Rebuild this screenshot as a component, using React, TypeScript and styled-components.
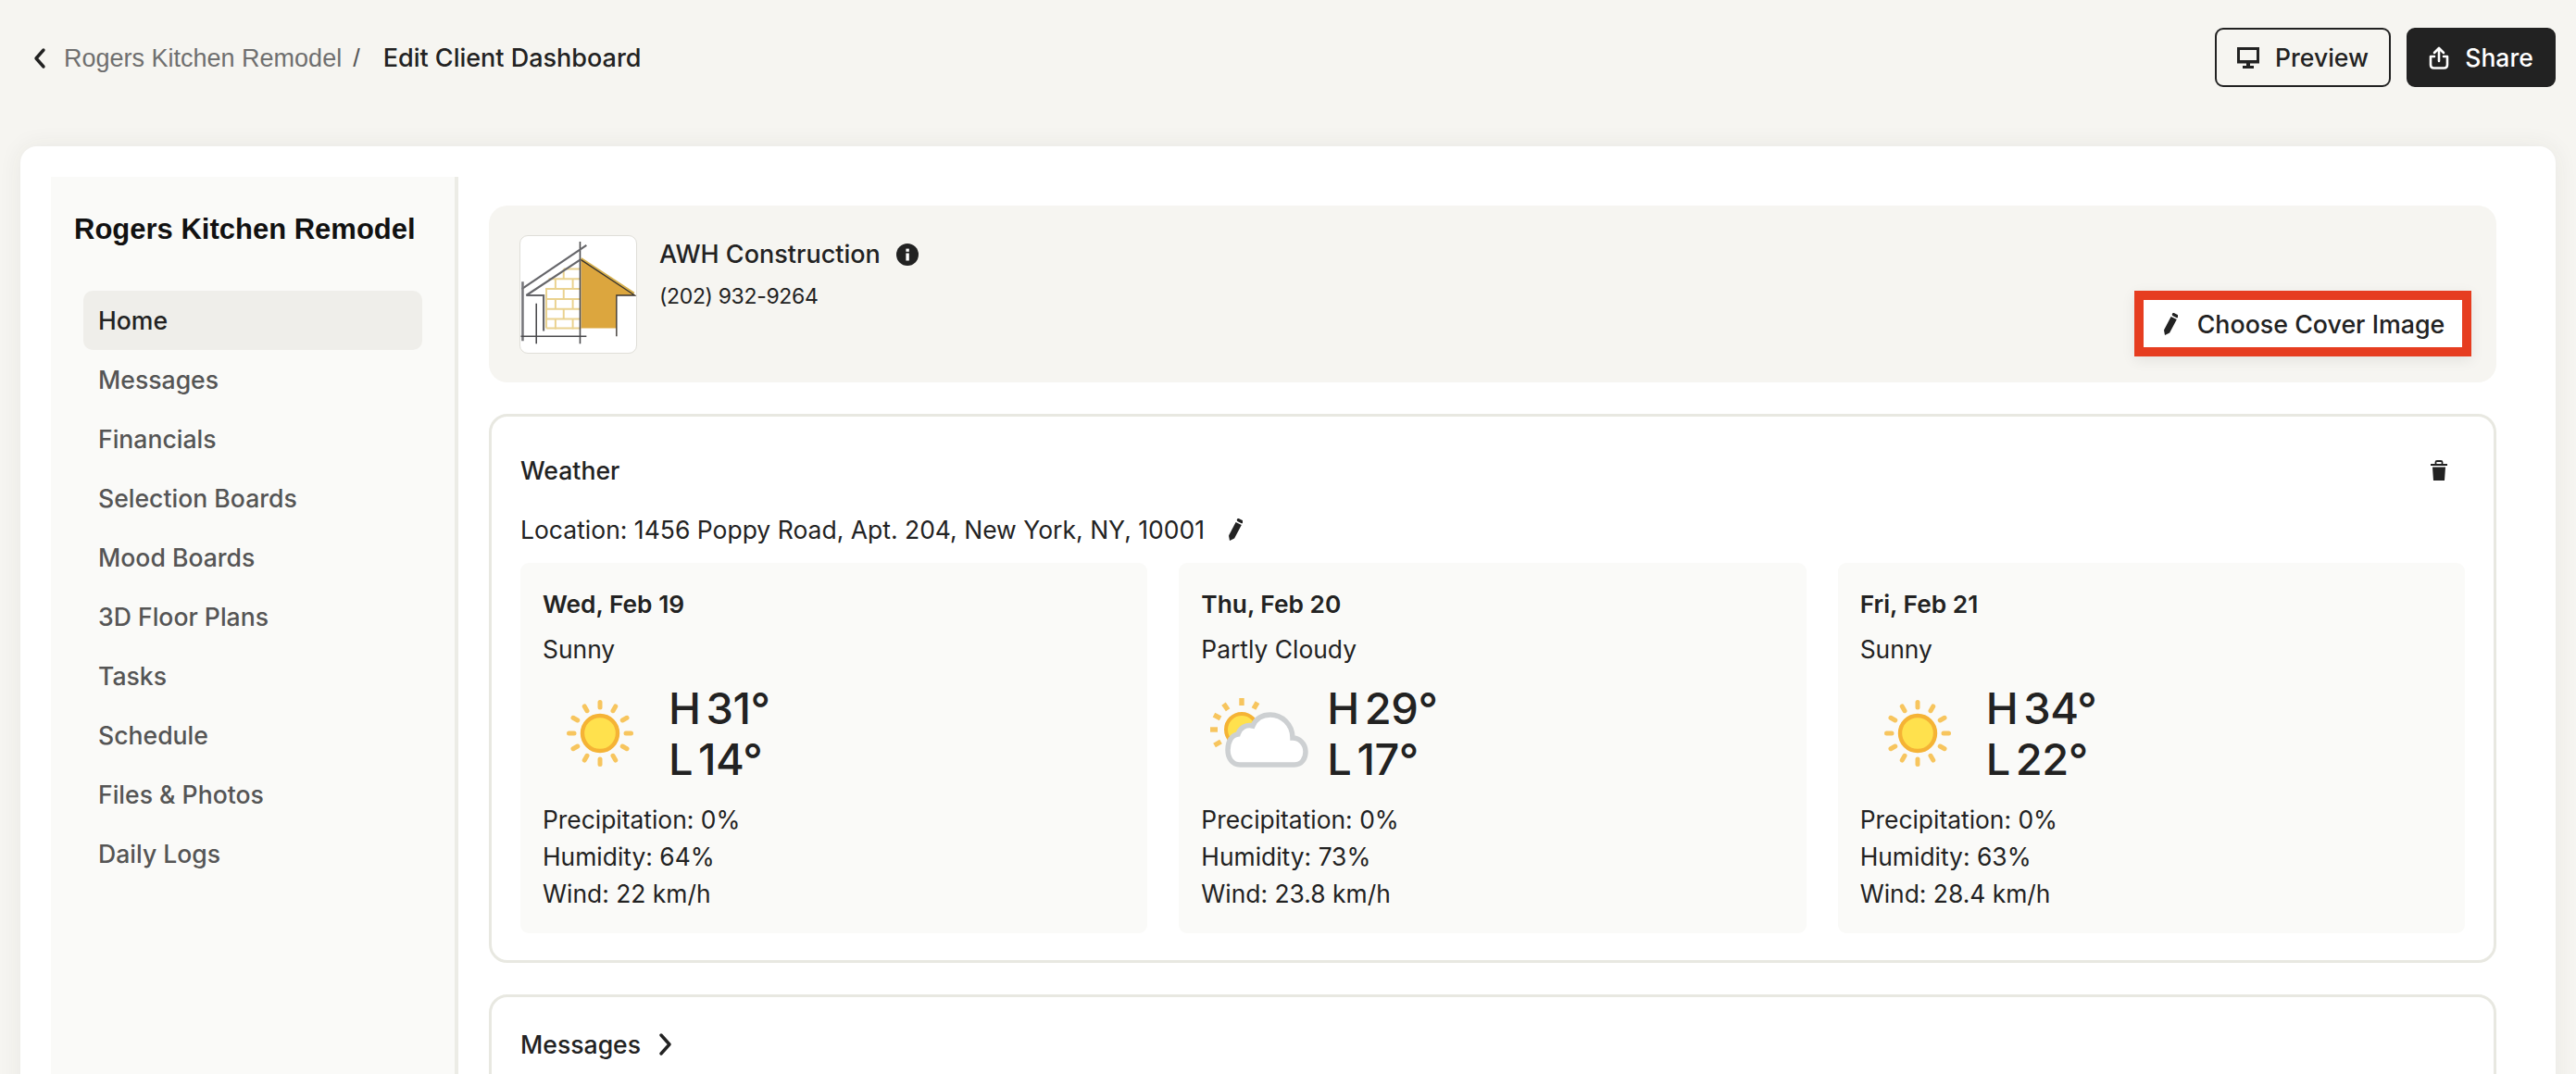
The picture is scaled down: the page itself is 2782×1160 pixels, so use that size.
import React from "react";
import styled, { createGlobalStyle } from "styled-components";

const Global = createGlobalStyle`
  html, body { margin: 0; height: 1160px; overflow: hidden; background: #f6f5f1; }
  * { box-sizing: border-box; }
  body { font-family: Inter, "Noto Sans", sans-serif; color: #222; }
`;

const Page = styled.div`
  height: 1160px;
  padding: 30px 22px 0;
  background: #f6f5f1;
  overflow: hidden;
`;
const TopBar = styled.header`
  display: flex;
  align-items: center;
  justify-content: space-between;
  height: 64px;
  margin-bottom: 64px;
`;
const Crumbs = styled.nav`
  display: flex;
  align-items: center;
  padding: 2px 0 0 13px;
  height: 64px;
`;
const BackLink = styled.span`
  display: flex;
  align-items: center;
  width: 34px;
`;
const CrumbParent = styled.span`
  font: 400 27px/40px "Liberation Sans", Arial, sans-serif;
  color: #6f6f6f;
`;
const CrumbSlash = styled.span`
  font: 400 27px/40px "Liberation Sans", Arial, sans-serif;
  color: #555;
  margin: 0 25px 0 12px;
`;
const CrumbCurrent = styled.span`
  font-size: 27px;
  line-height: 42px;
  font-weight: 500;
  color: #222;
`;
const Actions = styled.div`
  display: flex;
  gap: 17px;
`;
const TopButton = styled.button<{ $dark?: boolean }>`
  display: flex;
  align-items: center;
  justify-content: center;
  gap: 17px;
  height: 64px;
  width: ${(p) => (p.$dark ? "161px" : "190px")};
  border-radius: 9px;
  border: 2px solid #222;
  background: ${(p) => (p.$dark ? "#222" : "transparent")};
  color: ${(p) => (p.$dark ? "#fff" : "#222")};
  font: 500 26.5px/40px Inter, sans-serif;
  padding: 0;
`;
const Board = styled.section`
  display: flex;
  min-height: 1100px;
  padding: 33px 64px 0 33px;
  background: #fff;
  border-radius: 18px;
  box-shadow: 0 0 26px rgba(60, 60, 40, 0.07);
`;
const Sidebar = styled.aside`
  flex: 0 0 440px;
  min-width: 0;
  padding: 37px 35px 0 25px;
  background: #fafaf8;
  border-right: 4px solid #ecece6;
`;
const ProjectTitle = styled.h1`
  margin: 0 0 46px;
  font: 700 31px/40px "Liberation Sans", Arial, sans-serif;
  color: #111;
  white-space: nowrap;
`;
const NavList = styled.ul`
  list-style: none;
  margin: 0 0 0 10px;
  padding: 0;
`;
const NavItem = styled.li<{ $active?: boolean }>`
  height: 64px;
  padding-left: 16px;
  border-radius: 10px;
  font-size: 26.6px;
  line-height: 65px;
  font-weight: 500;
  color: ${(p) => (p.$active ? "#222" : "#555")};
  background: ${(p) => (p.$active ? "#efeeea" : "transparent")};
`;
const Main = styled.main`
  flex: 1;
  min-width: 0;
  padding: 31px 0 0 33px;
  display: flex;
  flex-direction: column;
  gap: 34px;
`;
const Band = styled.div`
  display: flex;
  justify-content: space-between;
  align-items: flex-end;
  height: 191px;
  padding: 32px 27px 28px 33px;
  background: #f6f5f1;
  border-radius: 20px;
`;
const Company = styled.div`
  display: flex;
  gap: 24px;
  align-self: flex-start;
`;
const LogoBox = styled.div`
  width: 127px;
  height: 128px;
  background: #fff;
  border: 1px solid #dfded8;
  border-radius: 9px;
  overflow: hidden;
`;
const CompanyName = styled.div`
  display: flex;
  align-items: center;
  gap: 17px;
  font-size: 27px;
  line-height: 42px;
  font-weight: 500;
`;
const Phone = styled.div`
  margin-top: 3px;
  font-size: 23px;
  line-height: 42px;
  letter-spacing: -0.35px;
`;
const CoverButton = styled.button`
  display: flex;
  align-items: center;
  justify-content: center;
  gap: 21px;
  width: 364px;
  height: 71px;
  border: 10px solid #e63d20;
  background: #fff;
  color: #222;
  font: 500 26.8px/40px Inter, sans-serif;
  padding: 0 0 0 3px;
  box-shadow: 0 4px 14px rgba(0, 0, 0, 0.08);
`;
const Panel = styled.article`
  border: 3px solid #e8e8e1;
  border-radius: 20px;
  padding: 31px 31px 29px;
  flex: none;
`;
const PanelHead = styled.div`
  display: flex;
  align-items: center;
  justify-content: space-between;
  height: 54px;
`;
const PanelTitle = styled.h2`
  margin: 0;
  font-size: 26.6px;
  line-height: 40px;
  font-weight: 500;
`;
const Location = styled.div`
  display: flex;
  align-items: center;
  gap: 26px;
  height: 44px;
  margin: 15px 0 14px;
  font-size: 26.5px;
`;
const TrashSlot = styled.span`
  display: flex;
  margin-right: 19px;
`;
const Forecast = styled.div`
  display: grid;
  grid-template-columns: repeat(3, 1fr);
  gap: 34px;
`;
const Day = styled.div`
  padding: 25px 24px 23px;
  height: 400px;
  background: #fafaf8;
  border-radius: 9px;
`;
const DayDate = styled.div`
  font-size: 26.3px;
  line-height: 40px;
  font-weight: 600;
`;
const DayCondition = styled.div`
  margin-top: 8px;
  font-size: 26.4px;
  line-height: 40px;
`;
const TempRow = styled.div`
  display: flex;
  align-items: center;
  margin-top: 16px;
`;
const IconSlot = styled.div`
  flex: 0 0 124px;
  display: flex;
  justify-content: center;
  margin-right: 12px;
`;
const Temps = styled.div`
  font-size: 47px;
  line-height: 55px;
  font-weight: 500;
  letter-spacing: -0.5px;
  word-spacing: -6px;
`;
const Details = styled.div`
  margin-top: 18px;
  font-size: 26.4px;
  line-height: 40px;
`;
const MessagesHead = styled.div`
  display: flex;
  align-items: center;
  gap: 19px;
  height: 54px;
`;
const ShortPanel = styled(Panel)`
  height: 240px;
  padding-top: 24px;
`;

const Chevron = ({ left }: { left?: boolean }) => (
  <svg width="15" height="24" viewBox="0 0 15 24" fill="none" stroke="#222" strokeWidth="3.4" strokeLinecap="round" strokeLinejoin="round">
    <path d={left ? "M12 3 L4 12 L12 21" : "M3 2 L12 12 L3 22"} />
  </svg>
);

const Pencil = () => (
  <svg width="15" height="24" viewBox="0 0 15 24" fill="#222">
    <path d="M7.6 4 L13.8 7.1 L6.1 21.6 L1 24 L0 18.4 Z" />
    <path d="M10.5 1.7 L14 3.5" stroke="#222" strokeWidth="3.4" strokeLinecap="round" />
  </svg>
);

const Monitor = () => (
  <svg width="24" height="23" viewBox="0 0 24 23" fill="none">
    <rect x="1.5" y="1.5" width="21" height="14" stroke="#222" strokeWidth="3" />
    <path d="M0 14 H24 V17.5 H0 Z M10 17 H14 V20 H10 Z M6 20 H18 V23 H6 Z" fill="#222" />
  </svg>
);

const ShareGlyph = () => (
  <svg width="22" height="25" viewBox="0 0 22 25" fill="none" stroke="#fff" strokeWidth="2.6" strokeLinecap="round" strokeLinejoin="round">
    <path d="M6 11 H2 V20 Q2 23.5 5.5 23.5 H16.5 Q20 23.5 20 20 V11 H16" />
    <path d="M11 16 V2.5 M6 7 L11 2 L16 7" />
  </svg>
);

const Info = () => (
  <svg width="24" height="24" viewBox="0 0 24 24">
    <circle cx="12" cy="12" r="12" fill="#222" />
    <rect x="10.4" y="10.5" width="3.4" height="8" fill="#fff" />
    <rect x="10.4" y="5.6" width="3.4" height="3.2" fill="#fff" />
  </svg>
);

const Trash = () => (
  <svg width="18" height="22" viewBox="0 0 18 22" fill="#222">
    <path d="M0 4 H18 V6 H0 Z M2 7.5 H16 L15 22 H3 Z" />
    <path d="M5.5 4 V2 Q5.5 1 7 1 H11 Q12.5 1 12.5 2 V4" fill="none" stroke="#222" strokeWidth="1.8" />
  </svg>
);

const rays = Array.from({ length: 12 }, (_, i) => (i * Math.PI) / 6);

const Sun = () => (
  <svg width="72" height="72" viewBox="0 0 72 72">
    {rays.map((a, i) => (
      <line
        key={i}
        x1={36 + 28 * Math.cos(a)}
        y1={36 + 28 * Math.sin(a)}
        x2={36 + 33.5 * Math.cos(a)}
        y2={36 + 33.5 * Math.sin(a)}
        stroke="#f7c55e"
        strokeWidth="5"
        strokeLinecap="round"
      />
    ))}
    <circle cx="36" cy="36" r="19" fill="#ffe14d" stroke="#f5b335" strokeWidth="4.4" />
  </svg>
);

const PartlyCloudy = () => (
  <svg width="107" height="76" viewBox="0 0 107 76">
    {[180, 208, 235, 270, 300, 150].map((deg) => {
      const a = (deg * Math.PI) / 180;
      return (
        <line
          key={deg}
          x1={35 + 26 * Math.cos(a)}
          y1={34 + 26 * Math.sin(a)}
          x2={35 + 34 * Math.cos(a)}
          y2={34 + 34 * Math.sin(a)}
          stroke="#f7c55e"
          strokeWidth="5.4"
        />
      );
    })}
    <circle cx="35" cy="34" r="17" fill="#ffe14d" stroke="#f5b335" strokeWidth="4" />
    <path
      d="M33 72 H92 C100 72 104 65 104 58 C104 49 97 43 90 43 C90 28 78 18 66 18 C56 18 50 23 47 30 C40 28 33 32 31 39 C24 40 20 47 20 56 C20 65 25 72 33 72 Z"
      fill="#fff"
      stroke="#cdd0d2"
      strokeWidth="5.5"
    />
  </svg>
);

const brickRows = [36, 47, 58, 69, 80, 91];

const Logo = () => (
  <svg width="125" height="126" viewBox="0 0 126 128" fill="none">
    <g stroke="#ead28f" strokeWidth="2">
      {brickRows.map((y) => (
        <path key={y} d={`M${Math.max(65 - (y + 2 - 26) * 1.5, 27)} ${y} H65`} />
      ))}
      <path d="M28 101 H66" />
      {brickRows.map((y, i) => (
        <path key={`v${y}`} d={i % 2 ? `M38 ${y} V${y + 11} M57 ${y} V${y + 11}` : `M47 ${y} V${y + 11}`} />
      ))}
      <path d="M28 58 V101" />
    </g>
    <path d="M66 26 L126 65 H105 V101 H66 Z" fill="#dca63e" />
    <path d="M66 25 L124 63" stroke="#d7b04c" strokeWidth="3" />
    <g stroke="#4a4a4d" strokeWidth="1.6">
      <path d="M66 26 L125 65 H105 V110" strokeWidth="1.4" stroke="#3a3530" />
      <path d="M65 6 V118" />
      <path d="M1 58 L72 10" strokeWidth="2.2" stroke="#66666a" />
      <path d="M6 65 L65 26" strokeWidth="2.2" stroke="#66666a" />
      <path d="M6 65 H25 V104" strokeWidth="2.2" stroke="#66666a" />
      <path d="M17 74 V118" />
      <path d="M2 50 V115" strokeWidth="2.6" stroke="#77777b" />
      <path d="M0 110 H72" />
    </g>
  </svg>
);

const nav = ["Home", "Messages", "Financials", "Selection Boards", "Mood Boards", "3D Floor Plans", "Tasks", "Schedule", "Files & Photos", "Daily Logs"];

const days = [
  { date: "Wed, Feb 19", cond: "Sunny", hi: 31, lo: 14, hum: 64, wind: "22", cloudy: false },
  { date: "Thu, Feb 20", cond: "Partly Cloudy", hi: 29, lo: 17, hum: 73, wind: "23.8", cloudy: true },
  { date: "Fri, Feb 21", cond: "Sunny", hi: 34, lo: 22, hum: 63, wind: "28.4", cloudy: false },
];

export default function App() {
  return (
    <Page>
      <Global />
      <TopBar>
        <Crumbs>
          <BackLink><Chevron left /></BackLink>
          <CrumbParent>Rogers Kitchen Remodel</CrumbParent>
          <CrumbSlash>/</CrumbSlash>
          <CrumbCurrent>Edit Client Dashboard</CrumbCurrent>
        </Crumbs>
        <Actions>
          <TopButton><Monitor />Preview</TopButton>
          <TopButton $dark><ShareGlyph />Share</TopButton>
        </Actions>
      </TopBar>
      <Board>
        <Sidebar>
          <ProjectTitle>Rogers Kitchen Remodel</ProjectTitle>
          <NavList>
            {nav.map((n, i) => (
              <NavItem key={n} $active={i === 0}>{n}</NavItem>
            ))}
          </NavList>
        </Sidebar>
        <Main>
          <Band>
            <Company>
              <LogoBox><Logo /></LogoBox>
              <div>
                <CompanyName>AWH Construction <Info /></CompanyName>
                <Phone>(202) 932-9264</Phone>
              </div>
            </Company>
            <CoverButton><Pencil />Choose Cover Image</CoverButton>
          </Band>
          <Panel>
            <PanelHead>
              <PanelTitle>Weather</PanelTitle>
              <TrashSlot><Trash /></TrashSlot>
            </PanelHead>
            <Location>
              Location: 1456 Poppy Road, Apt. 204, New York, NY, 10001
              <Pencil />
            </Location>
            <Forecast>
              {days.map((d) => (
                <Day key={d.date}>
                  <DayDate>{d.date}</DayDate>
                  <DayCondition>{d.cond}</DayCondition>
                  <TempRow>
                    <IconSlot>{d.cloudy ? <PartlyCloudy /> : <Sun />}</IconSlot>
                    <Temps>
                      <div>H {d.hi}°</div>
                      <div>L {d.lo}°</div>
                    </Temps>
                  </TempRow>
                  <Details>
                    <div>Precipitation: 0%</div>
                    <div>Humidity: {d.hum}%</div>
                    <div>Wind: {d.wind} km/h</div>
                  </Details>
                </Day>
              ))}
            </Forecast>
          </Panel>
          <ShortPanel>
            <MessagesHead>
              <PanelTitle>Messages</PanelTitle>
              <Chevron />
            </MessagesHead>
          </ShortPanel>
        </Main>
      </Board>
    </Page>
  );
}
